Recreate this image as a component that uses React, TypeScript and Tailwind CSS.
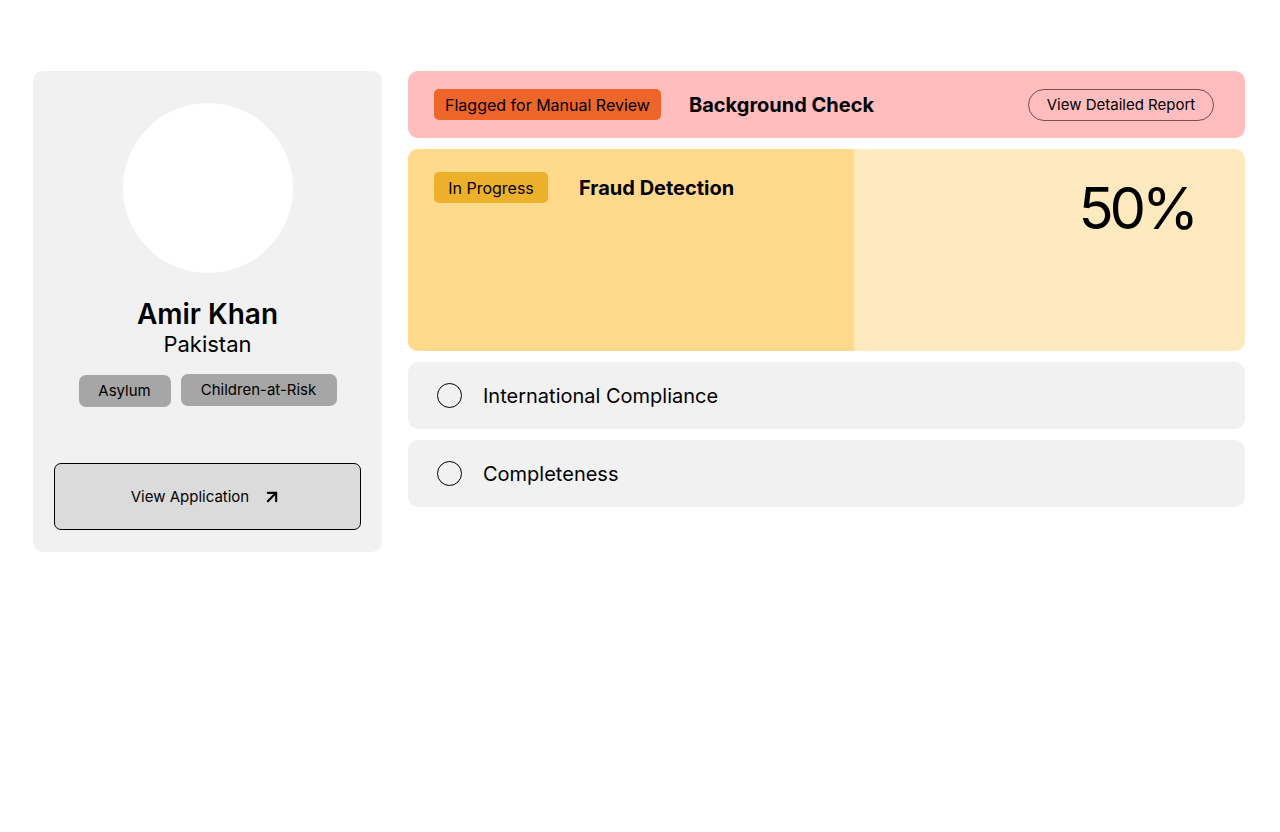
import { ArrowUpRight } from "lucide-react";

const font = { fontFamily: "Inter, sans-serif" };

const Check = ({ name }: { name: string }) => (
  <div className="flex h-[67px] items-center rounded-[10px] bg-[#f1f1f1] pl-[29px]">
    <div className="h-[25px] w-[25px] rounded-full border border-black" />
    <p className="ml-[21px] text-[20px] text-black">{name}</p>
  </div>
);

export default function App() {
  return (
    <div style={font} className="flex min-h-[832px] items-start gap-[26px] bg-white pl-[33px] pt-[71px] text-black">
      <div className="flex h-[481px] w-[349px] flex-col items-center rounded-[10px] bg-[#f1f1f1] pt-[32px]">
        <div className="h-[170px] w-[170px] rounded-full bg-white" />
        <h1 className="mt-[25px] text-[28px] leading-[33px] font-semibold">Amir Khan</h1>
        <p className="text-[22px] leading-[27px]">Pakistan</p>
        <div className="mt-[16px] flex items-start gap-[10px]">
          <span className="mt-px flex h-[32px] w-[92px] items-center justify-center rounded-[7px] bg-[#a6a6a6] text-[15px]">Asylum</span>
          <span className="flex h-[32px] w-[156px] items-center justify-center rounded-[7px] bg-[#a6a6a6] text-[15px]">Children-at-Risk</span>
        </div>
        <button className="mt-[56px] flex h-[67px] w-[307px] items-center justify-center gap-[13px] rounded-[7px] border border-black bg-[#dbdbdb] text-[15px]">
          <span className="pt-[2px]">View Application</span>
          <ArrowUpRight size={20} strokeWidth={2.5} className="mr-[2px]" />
        </button>
      </div>

      <div className="flex w-[837px] flex-col gap-[11px]">
        <div className="flex h-[67px] items-center rounded-[10px] bg-[#ffbdbd] pl-[26px] pr-[31px]">
          <span className="flex h-[31px] w-[227px] items-center justify-center rounded-[5px] bg-[#ee652a] text-[16px]">Flagged for Manual Review</span>
          <h2 className="ml-[28px] text-[20px] font-bold">Background Check</h2>
          <button className="ml-auto flex h-[32px] w-[186px] items-center justify-center rounded-full border border-[#7a5050] pt-[2px] text-[15px]">View Detailed Report</button>
        </div>

        <div className="relative h-[202px] overflow-hidden rounded-[10px] bg-[#ffe9bf]">
          <div className="absolute inset-y-0 left-0 w-[446px] bg-[#ffd98c]" />
          <div className="relative flex items-start pl-[26px] pr-[50px] pt-[23px]">
            <span className="flex h-[31px] w-[114px] items-center justify-center rounded-[5px] bg-[#edb02a] text-[16px]">In Progress</span>
            <h2 className="ml-[31px] text-[20px] leading-[33px] font-bold">Fraud Detection</h2>
            <p className="ml-auto text-[58px] leading-[72px] tracking-[-0.07em]">50%</p>
          </div>
        </div>

        <Check name="International Compliance" />
        <Check name="Completeness" />
      </div>
    </div>
  );
}
